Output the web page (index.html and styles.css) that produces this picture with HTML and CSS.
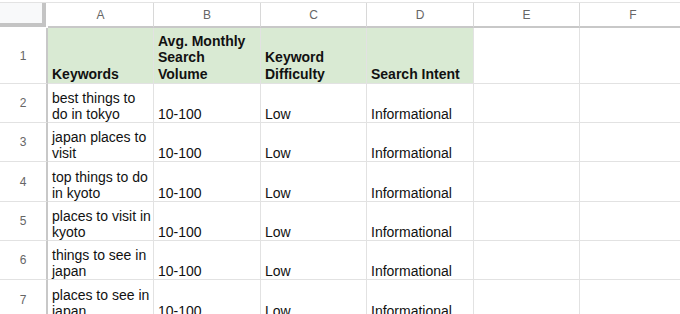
FILE: index.html
```html
<!DOCTYPE html>
<html>
<head>
<meta charset="utf-8">
<link rel="stylesheet" href="styles.css">
</head>
<body>
<div class="sheet">
  <div class="corner"></div>
  <div class="colhead">A</div>
  <div class="colhead">B</div>
  <div class="colhead">C</div>
  <div class="colhead">D</div>
  <div class="colhead">E</div>
  <div class="colhead">F</div>

  <div class="rowhead">1</div>
  <div class="cell hdr">Keywords</div>
  <div class="cell hdr">Avg. Monthly Search Volume</div>
  <div class="cell hdr">Keyword Difficulty</div>
  <div class="cell hdr">Search Intent</div>
  <div class="cell"></div>
  <div class="cell"></div>

  <div class="rowhead">2</div>
  <div class="cell">best things to do in tokyo</div>
  <div class="cell">10-100</div>
  <div class="cell">Low</div>
  <div class="cell">Informational</div>
  <div class="cell"></div>
  <div class="cell"></div>

  <div class="rowhead">3</div>
  <div class="cell">japan places to visit</div>
  <div class="cell">10-100</div>
  <div class="cell">Low</div>
  <div class="cell">Informational</div>
  <div class="cell"></div>
  <div class="cell"></div>

  <div class="rowhead">4</div>
  <div class="cell">top things to do in kyoto</div>
  <div class="cell">10-100</div>
  <div class="cell">Low</div>
  <div class="cell">Informational</div>
  <div class="cell"></div>
  <div class="cell"></div>

  <div class="rowhead">5</div>
  <div class="cell">places to visit in kyoto</div>
  <div class="cell">10-100</div>
  <div class="cell">Low</div>
  <div class="cell">Informational</div>
  <div class="cell"></div>
  <div class="cell"></div>

  <div class="rowhead">6</div>
  <div class="cell">things to see in japan</div>
  <div class="cell">10-100</div>
  <div class="cell">Low</div>
  <div class="cell">Informational</div>
  <div class="cell"></div>
  <div class="cell"></div>

  <div class="rowhead">7</div>
  <div class="cell">places to see in japan</div>
  <div class="cell">10-100</div>
  <div class="cell">Low</div>
  <div class="cell">Informational</div>
  <div class="cell"></div>
  <div class="cell"></div>
</div>
</body>
</html>
```

FILE: styles.css
```css
html, body {
  margin: 0;
  padding: 0;
  background: #ffffff;
  overflow: hidden;
}
body {
  width: 680px;
  height: 314px;
  font-family: "Liberation Sans", Arial, sans-serif;
}
.sheet {
  display: grid;
  grid-template-columns: 48px 106px 107px 106px 107px 106px 107px;
  grid-template-rows: 25px 56px 39px 39px 40px 39px 39px 40px;
  border-top: 1px solid #e3e3e3;
  margin-top: 2px;
  height: 311px;
  overflow: hidden;
}
.corner {
  background: #f8f9fa;
  border-right: 4px solid #c4c4c4;
  border-bottom: 4px solid #c4c4c4;
  margin-right: 2px;
  box-sizing: border-box;
  height: 24px;
}
.colhead {
  display: flex;
  align-items: center;
  justify-content: center;
  color: #666666;
  font-size: 12px;
  border-right: 1px solid #d8d8d8;
  border-bottom: 2px solid #c8c8c8;
  box-sizing: border-box;
}
.rowhead {
  display: flex;
  align-items: center;
  justify-content: center;
  color: #666666;
  font-size: 12px;
  border-right: 2px solid #c8c8c8;
  border-bottom: 1px solid #e2e2e2;
  box-sizing: border-box;
}
.cell {
  display: flex;
  align-items: flex-end;
  padding: 0 2px 0 4px;
  font-size: 14px;
  line-height: 16px;
  color: #111111;
  border-right: 1px solid #e2e2e2;
  border-bottom: 1px solid #e2e2e2;
  box-sizing: border-box;
  overflow: hidden;
}
.hdr {
  background: #d9ead3;
  font-weight: bold;
  line-height: 16.5px;
  padding-right: 3px;
  padding-bottom: 1px;
}
```
